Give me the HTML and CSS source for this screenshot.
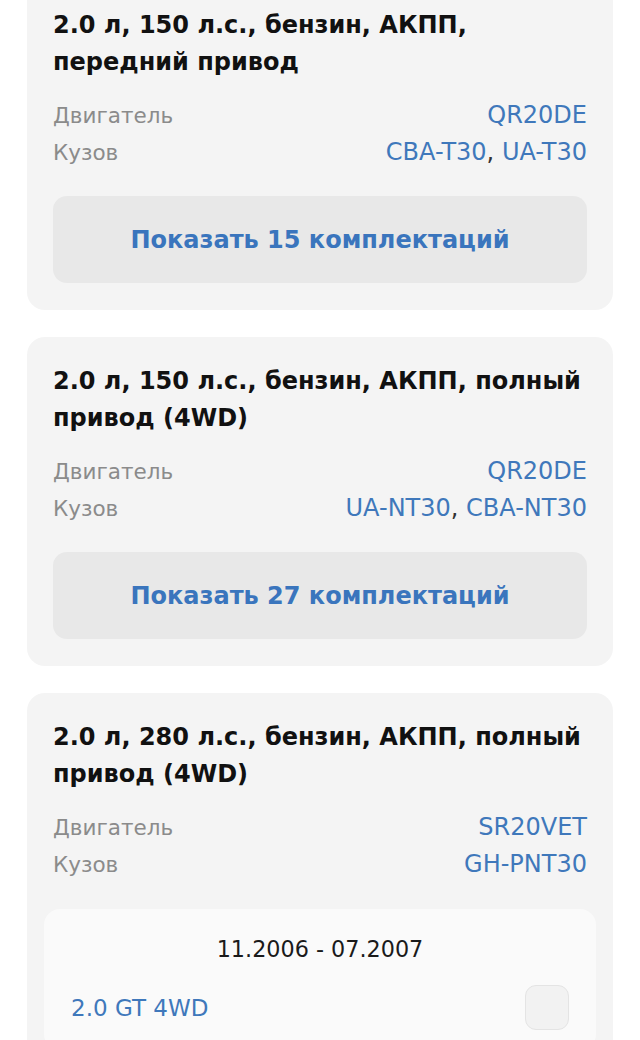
FILE: index.html
```html
<!DOCTYPE html>
<html lang="ru">
<head>
<meta charset="utf-8">
<link rel="stylesheet" href="styles.css">
</head>
<body>
<main class="list">
  <section class="card first">
    <h2 class="title">2.0 л, 150 л.с., бензин, АКПП, передний привод</h2>
    <dl class="specs">
      <div class="row"><dt>Двигатель</dt><dd><span class="link">QR20DE</span></dd></div>
      <div class="row"><dt>Кузов</dt><dd><span class="link">CBA-T30</span>, <span class="link">UA-T30</span></dd></div>
    </dl>
    <button class="show">Показать 15 комплектаций</button>
  </section>
  <section class="card">
    <h2 class="title">2.0 л, 150 л.с., бензин, АКПП, полный привод (4WD)</h2>
    <dl class="specs">
      <div class="row"><dt>Двигатель</dt><dd><span class="link">QR20DE</span></dd></div>
      <div class="row"><dt>Кузов</dt><dd><span class="link">UA-NT30</span>, <span class="link">CBA-NT30</span></dd></div>
    </dl>
    <button class="show">Показать 27 комплектаций</button>
  </section>
  <section class="card">
    <h2 class="title">2.0 л, 280 л.с., бензин, АКПП, полный привод (4WD)</h2>
    <dl class="specs">
      <div class="row"><dt>Двигатель</dt><dd><span class="link">SR20VET</span></dd></div>
      <div class="row"><dt>Кузов</dt><dd><span class="link">GH-PNT30</span></dd></div>
    </dl>
    <div class="inner">
      <div class="period">11.2006 - 07.2007</div>
      <div class="trim">
        <span class="trim-name">2.0 GT 4WD</span>
        <span class="check"></span>
      </div>
    </div>
  </section>
</main>
</body>
</html>
```

FILE: styles.css
```css
* { box-sizing: border-box; }
html, body {
  margin: 0;
  padding: 0;
  background: #ffffff;
  font-family: "DejaVu Sans", "Noto Sans", sans-serif;
  color: #111111;
}
body { overflow: hidden; height: 1040px; }
.list {
  display: flex;
  flex-direction: column;
  gap: 27px;
  padding: 0 27px;
  margin-top: -19px;
}
.card {
  background: #f4f4f4;
  border-radius: 18px;
  padding: 26px 26px 27px;
}
.title {
  margin: 0;
  font-size: 24px;
  line-height: 37px;
  font-weight: 700;
  color: #111111;
}
.specs {
  margin: 16px 0 0;
  display: flex;
  flex-direction: column;
}
.row {
  display: flex;
  justify-content: space-between;
  align-items: baseline;
  line-height: 37px;
}
.row dt { color: #8b8b8b; font-size: 21.5px; }
.row dd { margin: 0; color: #333333; font-size: 24px; }
.link { color: #3f78bb; }
.show {
  display: block;
  width: 100%;
  height: 87px;
  margin-top: 25px;
  border: 0;
  border-radius: 14px;
  background: #e8e8e8;
  font-family: inherit;
  font-size: 24px;
  font-weight: 700;
  color: #3a75bd;
}
.inner {
  margin: 26px -9px 0;
  background: #fafafa;
  border-radius: 16px;
  padding: 22px 27px 20px;
}
.period {
  text-align: center;
  font-size: 22.3px;
  line-height: 36px;
  color: #1a1a1a;
}
.trim {
  margin-top: 18px;
  display: flex;
  justify-content: space-between;
  align-items: center;
}
.trim-name {
  font-size: 23px;
  color: #3f78bb;
}
.check {
  width: 44px;
  height: 45px;
  border-radius: 11px;
  background: #f2f2f2;
  border: 1px solid #e4e4e4;
}
```
